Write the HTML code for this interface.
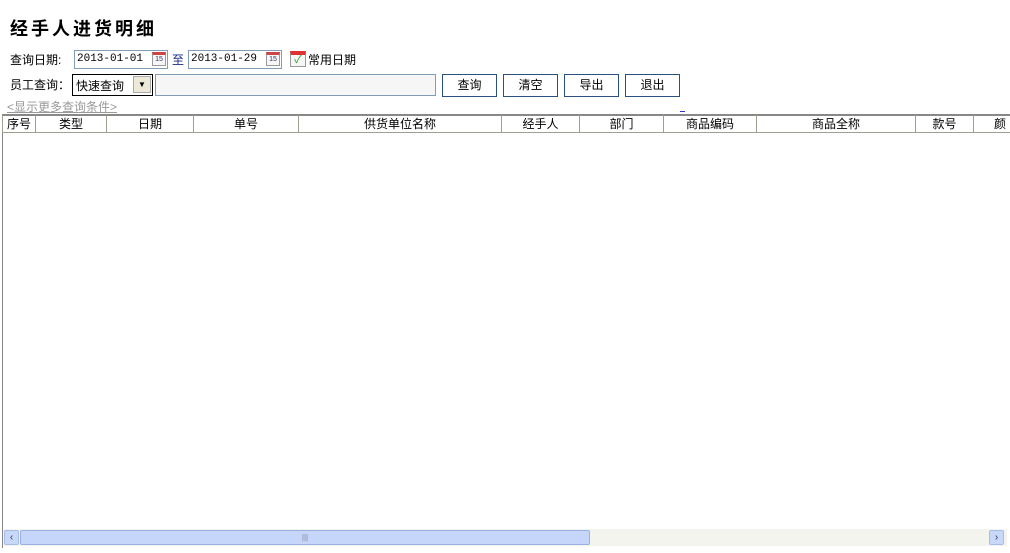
<!DOCTYPE html>
<html><head><meta charset="utf-8"><style>
*{margin:0;padding:0;box-sizing:border-box}
body{width:1010px;height:553px;background:#fff;font-family:"Liberation Sans","Noto Sans CJK SC","WenQuanYi Zen Hei",sans-serif;font-size:12px;color:#000;position:relative;overflow:hidden}
.a{position:absolute;white-space:nowrap}
.title{left:10px;top:15px;font-size:18px;font-weight:bold;letter-spacing:3px}
.inp{position:absolute;border:1px solid #7f9db9;background:#fff;height:19px;font-family:"Liberation Mono",monospace;font-size:11px;line-height:17px;padding-left:2px}
.cal{position:absolute;width:14px;height:14px;border:1px solid #999;background:#f6f6f6;border-top:3px solid #c44;font-size:7px;line-height:9px;text-align:center;color:#336}
.btn{position:absolute;top:74px;width:55px;height:23px;border:1px solid #2a5080;background:#fff;text-align:center;line-height:21px;font-size:12px}
.h{position:absolute;top:114px;height:19px;border-top:2px solid #888;border-bottom:1px solid #a0a090;border-left:1px solid #a0a090;text-align:center;line-height:16px;overflow:hidden}
</style></head><body>
<div class="a title">经手人进货明细</div>
<div class="a" style="left:10px;top:51px">查询日期:</div>
<div class="inp" style="left:74px;top:50px;width:94px">2013-01-01</div>
<div class="cal" style="left:152px;top:52px">15</div>
<div class="a" style="left:172px;top:51px;color:#1a2a8a">至</div>
<div class="inp" style="left:188px;top:50px;width:94px">2013-01-29</div>
<div class="cal" style="left:266px;top:52px">15</div>
<div class="cal" style="left:290px;top:51px;width:16px;height:16px;border-top:4px solid #d33;color:#2a2;font-size:11px;line-height:10px">✓</div>
<div class="a" style="left:308px;top:51px">常用日期</div>
<div class="a" style="left:10px;top:76px">员工查询：</div>
<div class="a" style="left:72px;top:74px;width:81px;height:22px;border:1px solid #000;background:#fff"></div>
<div class="a" style="left:76px;top:77px">快速查询</div>
<div class="a" style="left:133px;top:76px;width:18px;height:17px;background:#ece9d8;border:1px solid #aaa;font-size:8px;text-align:center;line-height:16px">▼</div>
<div class="a" style="left:155px;top:74px;width:281px;height:22px;border:1px solid #7f9db9;background:#f6f6f6"></div>
<div class="btn" style="left:442px">查询</div>
<div class="btn" style="left:503px">清空</div>
<div class="btn" style="left:564px">导出</div>
<div class="btn" style="left:625px">退出</div>
<div class="a" style="left:7px;top:98px;color:#999;text-decoration:underline">&lt;显示更多查询条件&gt;</div>
<div class="a" style="left:680px;top:111px;width:5px;height:1px;background:#33c"></div>
<div class="a" style="left:2px;top:132px;width:1px;height:416px;background:#888"></div>
<div class="h" style="left:2px;width:33px">序号</div>
<div class="h" style="left:35px;width:71px">类型</div>
<div class="h" style="left:106px;width:87px">日期</div>
<div class="h" style="left:193px;width:105px">单号</div>
<div class="h" style="left:298px;width:203px">供货单位名称</div>
<div class="h" style="left:501px;width:78px">经手人</div>
<div class="h" style="left:579px;width:84px">部门</div>
<div class="h" style="left:663px;width:93px">商品编码</div>
<div class="h" style="left:756px;width:159px">商品全称</div>
<div class="h" style="left:915px;width:58px">款号</div>
<div class="h" style="left:973px;width:37px;text-align:left;padding-left:20px">颜</div>
<div class="a" style="left:3px;top:529px;width:1004px;height:17px;background:#f4f4ee"></div>
<div class="a" style="left:4px;top:530px;width:15px;height:15px;background:#c8d8f8;border:1px solid #a8bce8;border-radius:2px;font-size:10px;line-height:13px;text-align:center;color:#336">‹</div>
<div class="a" style="left:20px;top:530px;width:570px;height:15px;background:#c6d6fb;border:1px solid #9ab0e0;border-radius:2px;font-size:8px;line-height:13px;text-align:center;color:#889">|||</div>
<div class="a" style="left:989px;top:530px;width:15px;height:15px;background:#c8d8f8;border:1px solid #a8bce8;border-radius:2px;font-size:10px;line-height:13px;text-align:center;color:#336">›</div>
</body></html>
